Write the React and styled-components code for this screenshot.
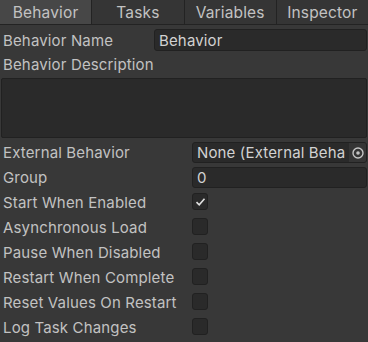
import React from "react";
import styled, { createGlobalStyle } from "styled-components";

const Global = createGlobalStyle`
  html, body { margin: 0; padding: 0; background: #383838; }
  body { font-family: Inter, "Noto Sans", sans-serif; }
`;

const Panel = styled.div`
  width: 368px;
  height: 342px;
  background: #383838;
  color: #c2c2c2;
  font-size: 15px;
  letter-spacing: 0.15px;
  overflow: hidden;
  display: flex;
  flex-direction: column;
`;

const TabBar = styled.div`
  display: grid;
  grid-template-columns: repeat(4, 1fr);
  height: 24px;
  border-bottom: 1px solid #232323;
  background: #232323;
  gap: 1px;
  flex: none;
`;

const Tab = styled.div`
  display: flex;
  align-items: center;
  justify-content: center;
  background: ${(p) => (p.$active ? "#474747" : "#353535")};
  color: #c2c2c2;
  font-size: 15.5px;
  padding-top: 1px;
`;

const Body = styled.div`
  display: flex;
  flex-direction: column;
  padding: 3px 1px 0 3px;
`;

const Row = styled.div`
  display: flex;
  align-items: center;
  height: ${(p) => p.$h || 25}px;
  flex: none;
`;

const Label = styled.div`
  width: ${(p) => p.$w}px;
  flex: none;
  white-space: nowrap;
`;

const TextField = styled.div`
  flex: 1;
  height: ${(p) => p.$h || 21}px;
  box-sizing: border-box;
  background: #2a2a2a;
  border: 1px solid #212121;
  border-radius: 3px;
  color: #d2d2d2;
  display: flex;
  align-items: center;
  padding-left: 4px;
  overflow: hidden;
  white-space: nowrap;
`;

const ObjectField = styled(TextField)`
  padding-left: 0;
  justify-content: space-between;
`;

const ObjectText = styled.span`
  padding-left: 4px;
  overflow: hidden;
  white-space: nowrap;
  width: 148px;
`;

const PickerButton = styled.div`
  width: 17px;
  height: 100%;
  background: #353535;
  display: flex;
  align-items: center;
  justify-content: center;
  flex: none;
`;

const TextArea = styled.div`
  margin: 2px 0 2px -2px;
  height: 60px;
  flex: none;
  box-sizing: border-box;
  background: #2a2a2a;
  border: 1px solid #212121;
  border-radius: 2px;
`;

const Check = styled.div`
  width: 16px;
  height: 17px;
  margin-top: -2px;
  box-sizing: border-box;
  background: #2a2a2a;
  border: 1px solid #212121;
  border-radius: 3px;
  display: flex;
  align-items: center;
  justify-content: center;
`;

const fields = [
  ["Start When Enabled", true],
  ["Asynchronous Load", false],
  ["Pause When Disabled", false],
  ["Restart When Complete", false],
  ["Reset Values On Restart", false],
  ["Log Task Changes", false],
];

export default function App() {
  return (
    <Panel>
      <Global />
      <TabBar>
        <Tab $active>Behavior</Tab>
        <Tab>Tasks</Tab>
        <Tab>Variables</Tab>
        <Tab>Inspector</Tab>
      </TabBar>
      <Body>
        <Row $h={24}>
          <Label $w={151}>Behavior Name</Label>
          <TextField $h={22}>Behavior</TextField>
        </Row>
        <Row $h={24}>
          <Label $w={220}>Behavior Description</Label>
        </Row>
        <TextArea />
        <Row>
          <Label $w={189}>External Behavior</Label>
          <ObjectField>
            <ObjectText>None (External Behavior)</ObjectText>
            <PickerButton>
              <svg width="12" height="12" viewBox="0 0 12 12">
                <circle cx="6" cy="6" r="5" fill="none" stroke="#c4c4c4" strokeWidth="1.4" />
                <circle cx="6" cy="6" r="1.8" fill="#c4c4c4" />
              </svg>
            </PickerButton>
          </ObjectField>
        </Row>
        <Row>
          <Label $w={189}>Group</Label>
          <TextField>0</TextField>
        </Row>
        {fields.map(([name, on]) => (
          <Row key={name}>
            <Label $w={189}>{name}</Label>
            <Check>
              {on && (
                <svg width="11" height="10" viewBox="0 0 11 10">
                  <path d="M1.5 5.2 L4.2 7.8 L9.5 1.8" fill="none" stroke="#e0e0e0" strokeWidth="1.6" />
                </svg>
              )}
            </Check>
          </Row>
        ))}
      </Body>
    </Panel>
  );
}
